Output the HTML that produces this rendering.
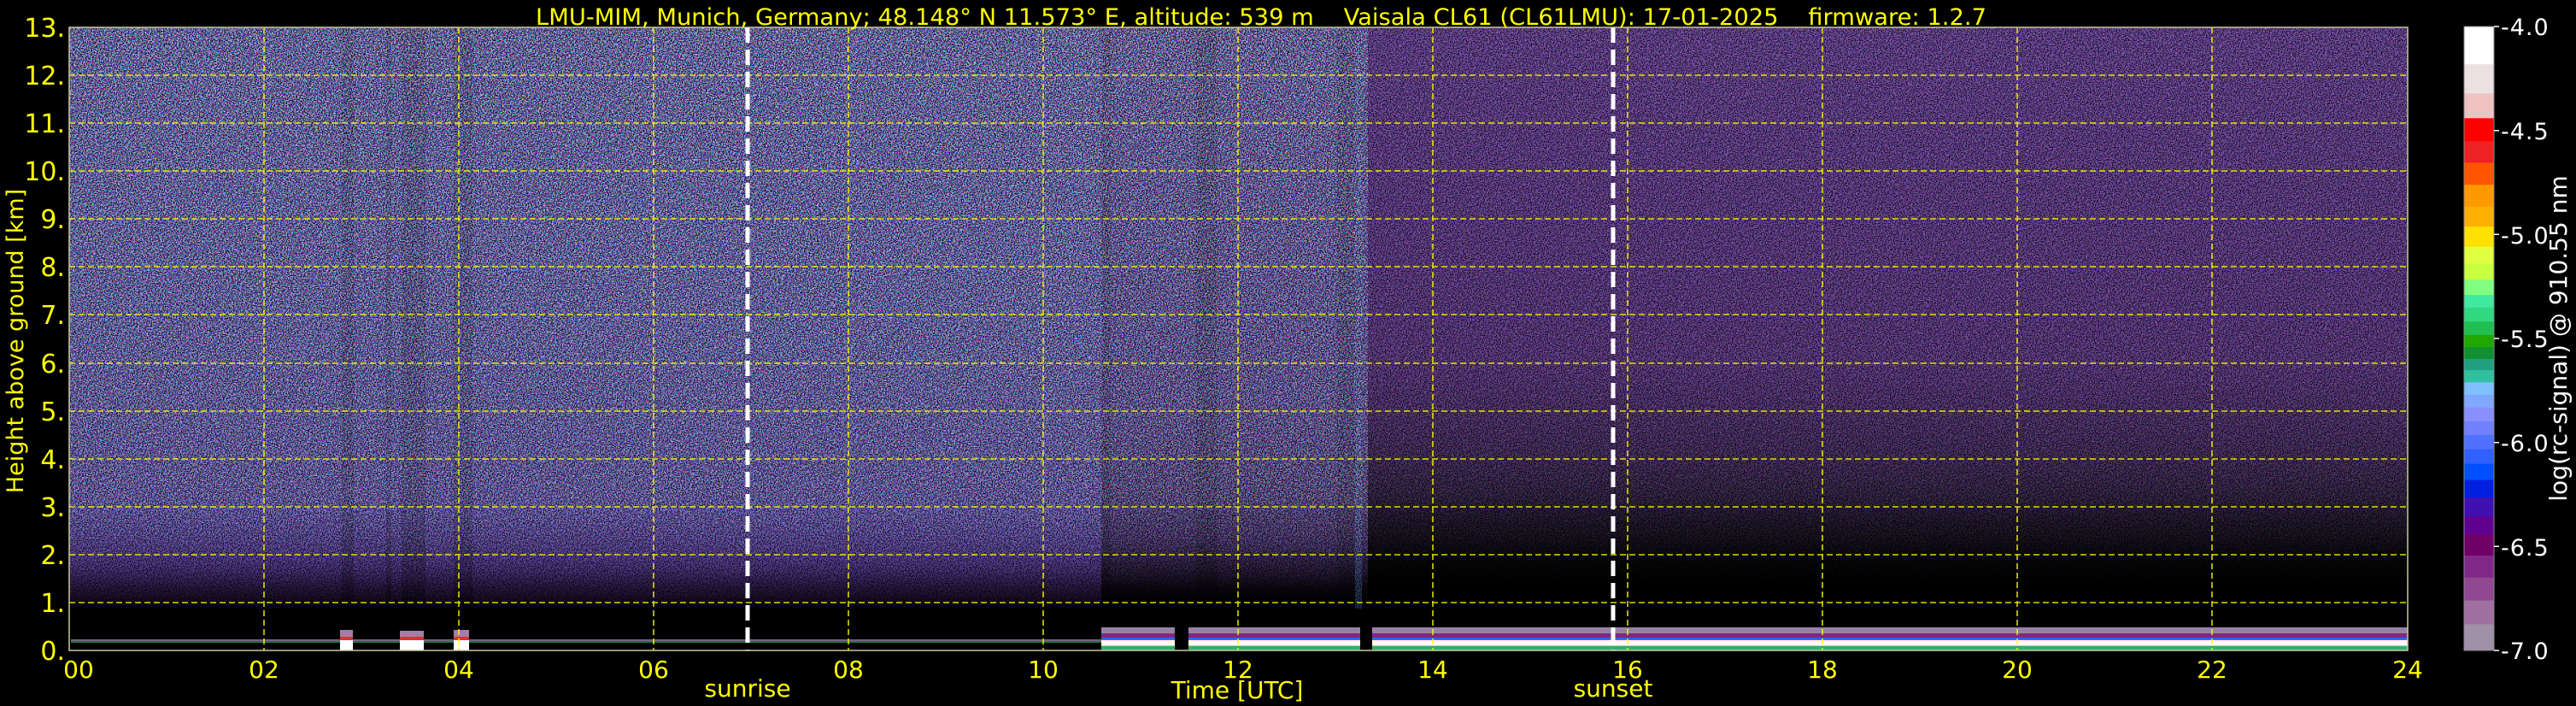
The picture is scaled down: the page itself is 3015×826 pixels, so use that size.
<!DOCTYPE html>
<html><head><meta charset="utf-8"><style>
html,body{margin:0;padding:0;background:#000;width:3015px;height:826px;overflow:hidden}
svg{display:block}
text{font-family:"DejaVu Sans","Liberation Sans",sans-serif}
</style></head><body>
<svg width="3015" height="826" viewBox="0 0 3015 826" xmlns="http://www.w3.org/2000/svg">
<defs>
<linearGradient id="gA" x1="0" y1="32" x2="0" y2="761" gradientUnits="userSpaceOnUse">
<stop offset="0" stop-color="rgb(110,110,215)"/>
<stop offset="0.5" stop-color="rgb(105,100,205)"/>
<stop offset="0.78" stop-color="rgb(100,80,190)"/>
<stop offset="0.86" stop-color="rgb(80,50,140)"/>
<stop offset="0.91" stop-color="rgb(35,20,55)"/>
<stop offset="0.935" stop-color="#000"/>
<stop offset="1" stop-color="#000"/>
</linearGradient>
<linearGradient id="gB" x1="0" y1="32" x2="0" y2="761" gradientUnits="userSpaceOnUse">
<stop offset="0" stop-color="rgb(110,95,200)"/>
<stop offset="0.6" stop-color="rgb(95,70,170)"/>
<stop offset="0.82" stop-color="rgb(65,38,105)"/>
<stop offset="0.9" stop-color="rgb(15,8,20)"/>
<stop offset="0.92" stop-color="#000"/>
<stop offset="1" stop-color="#000"/>
</linearGradient>
<linearGradient id="gC" x1="0" y1="32" x2="0" y2="761" gradientUnits="userSpaceOnUse">
<stop offset="0" stop-color="rgb(110,60,160)"/>
<stop offset="0.54" stop-color="rgb(95,48,135)"/>
<stop offset="0.7" stop-color="rgb(60,30,82)"/>
<stop offset="0.8" stop-color="rgb(20,10,28)"/>
<stop offset="0.86" stop-color="#000"/>
<stop offset="1" stop-color="#000"/>
</linearGradient>
<linearGradient id="gM" x1="0" y1="32" x2="0" y2="761" gradientUnits="userSpaceOnUse">
<stop offset="0" stop-color="#fff"/>
<stop offset="0.75" stop-color="#ccc"/>
<stop offset="0.9" stop-color="#000"/>
<stop offset="1" stop-color="#000"/>
</linearGradient>
<mask id="mk"><rect x="81" y="32" width="1520" height="729" fill="url(#gM)"/><rect x="1601" y="32" width="1217" height="729" fill="url(#gM)" opacity="0.35"/></mask>
<filter id="cn" x="0" y="0" width="100%" height="100%" filterUnits="objectBoundingBox">
<feTurbulence type="fractalNoise" baseFrequency="0.6" numOctaves="1" seed="7"/>
<feColorMatrix type="matrix" values="6 0 0 0 -2.5  0 6 0 0 -2.5  0 0 6 0 -2.1  0 0 0 0 1"/>
</filter>
<filter id="bn" x="0" y="0" width="100%" height="100%" filterUnits="objectBoundingBox">
<feTurbulence type="fractalNoise" baseFrequency="0.8" numOctaves="1" seed="3"/>
<feColorMatrix type="matrix" values="0 0 0 0 0  0 0 0 0 0  0 0 0 0 0  8 0 0 0 -3.8"/>
</filter>
</defs>

<rect x="81" y="32" width="1208" height="729" fill="url(#gA)"/>
<rect x="1289" y="32" width="312" height="729" fill="url(#gB)"/>
<rect x="1601" y="32" width="1217" height="729" fill="url(#gC)"/>
<g fill="#000" opacity="0.25">
<rect x="400" y="32" width="14" height="680"/>
<rect x="452" y="32" width="6" height="680"/>
<rect x="470" y="32" width="28" height="680"/>
<rect x="531" y="32" width="22" height="680"/>
<rect x="1290" y="32" width="10" height="660"/>
<rect x="1400" y="32" width="25" height="660"/>
<rect x="1565" y="32" width="20" height="660"/>
</g>
<rect x="1586" y="32" width="8" height="680" fill="rgb(90,140,210)" opacity="0.35"/>
<rect x="81" y="32" width="2737" height="729" filter="url(#cn)" mask="url(#mk)" opacity="0.6"/>
<rect x="81" y="32" width="2737" height="729" filter="url(#bn)" opacity="0.8"/>

<rect x="83" y="748" width="1206" height="2" fill="#c0a0e0" opacity="0.6"/>
<rect x="83" y="750" width="1206" height="2" fill="#40c080" opacity="0.6"/>
<g>
<rect x="398" y="737" width="15" height="8" fill="#a080a8"/><rect x="398" y="745" width="15" height="4" fill="#e03030"/><rect x="398" y="749" width="15" height="12" fill="#fff"/>
<rect x="468" y="738" width="28" height="7" fill="#a080a8"/><rect x="468" y="745" width="28" height="4" fill="#e03030"/><rect x="468" y="749" width="28" height="12" fill="#fff"/>
<rect x="531" y="737" width="18" height="8" fill="#a080a8"/><rect x="531" y="745" width="18" height="4" fill="#e03030"/><rect x="531" y="749" width="18" height="12" fill="#fff"/>
</g>
<g>
<rect x="1289" y="734" width="1529" height="7" fill="#9a80a8"/>
<rect x="1289" y="741" width="1529" height="5" fill="#7a2a88"/>
<rect x="1289" y="746" width="1529" height="2" fill="#3060ff"/>
<rect x="1289" y="748" width="1529" height="1" fill="#ff3030"/>
<rect x="1289" y="749" width="1529" height="6" fill="#ffffff"/>
<rect x="1289" y="755" width="1529" height="1" fill="#e0d040"/>
<rect x="1289" y="756" width="1529" height="5" fill="#30b070"/>
<rect x="1375" y="733" width="16" height="28" fill="#000"/>
<rect x="1592" y="733" width="14" height="28" fill="#000"/>
</g>

<g stroke="#ffff00" stroke-width="1.6" stroke-dasharray="7,4" opacity="0.85" fill="none">
<path d="M81 705H2818M81 649H2818M81 593H2818M81 537H2818M81 481H2818M81 425H2818M81 368H2818M81 312H2818M81 256H2818M81 200H2818M81 144H2818M81 88H2818"/>
<path d="M309 32V761M537 32V761M765 32V761M993 32V761M1221 32V761M1449 32V761M1677 32V761M1905 32V761M2133 32V761M2361 32V761M2589 32V761"/>
</g>
<g stroke="#fff" stroke-width="5" stroke-dasharray="18,8" fill="none">
<path d="M875 32V761"/><path d="M1888 32V761"/>
</g>
<rect x="81" y="32" width="2737" height="729" fill="none" stroke="#c8c8a0" stroke-width="1.5"/>

<text x="1476" y="29" fill="#ffff00" font-size="27" text-anchor="middle" textLength="1698" lengthAdjust="spacingAndGlyphs" xml:space="preserve">LMU-MIM, Munich, Germany; 48.148° N 11.573° E, altitude: 539 m    Vaisala CL61 (CL61LMU): 17-01-2025    firmware: 1.2.7</text>

<g fill="#ffff00" font-size="30" text-anchor="end">
<text x="76" y="43">13.</text><text x="76" y="99">12.</text><text x="76" y="155">11.</text><text x="76" y="211">10.</text>
<text x="76" y="267">9.</text><text x="76" y="323">8.</text><text x="76" y="379">7.</text><text x="76" y="436">6.</text>
<text x="76" y="492">5.</text><text x="76" y="548">4.</text><text x="76" y="604">3.</text><text x="76" y="660">2.</text>
<text x="76" y="716">1.</text><text x="76" y="772">0.</text>
</g>
<text transform="translate(27,399) rotate(-90)" fill="#ffff00" font-size="27" text-anchor="middle">Height above ground [km]</text>

<g fill="#ffff00" font-size="28" text-anchor="middle">
<text x="92" y="793">00</text><text x="309" y="793">02</text><text x="537" y="793">04</text><text x="765" y="793">06</text>
<text x="993" y="793">08</text><text x="1221" y="793">10</text><text x="1449" y="793">12</text><text x="1677" y="793">14</text>
<text x="1905" y="793">16</text><text x="2133" y="793">18</text><text x="2361" y="793">20</text><text x="2589" y="793">22</text>
<text x="2818" y="793">24</text>
<text x="875" y="815">sunrise</text>
<text x="1448" y="817">Time [UTC]</text>
<text x="1888" y="815">sunset</text>
</g>

<g>
<rect x="2884" y="31.0" width="35" height="44.7" fill="#ffffff"/>
<rect x="2884" y="75.2" width="35" height="34.7" fill="#ebe1e3"/>
<rect x="2884" y="109.4" width="35" height="29.4" fill="#f0c3c3"/>
<rect x="2884" y="138.3" width="35" height="27.3" fill="#ff0000"/>
<rect x="2884" y="165.2" width="35" height="25.7" fill="#ee2222"/>
<rect x="2884" y="190.4" width="35" height="26.3" fill="#ff5500"/>
<rect x="2884" y="216.2" width="35" height="26.3" fill="#ff9900"/>
<rect x="2884" y="242.0" width="35" height="23.7" fill="#ffb000"/>
<rect x="2884" y="265.1" width="35" height="24.2" fill="#ffe000"/>
<rect x="2884" y="288.8" width="35" height="20.0" fill="#e0ff40"/>
<rect x="2884" y="308.3" width="35" height="19.4" fill="#c8ff40"/>
<rect x="2884" y="327.2" width="35" height="18.4" fill="#80ff80"/>
<rect x="2884" y="345.1" width="35" height="15.2" fill="#40e8a0"/>
<rect x="2884" y="359.9" width="35" height="16.8" fill="#30d880"/>
<rect x="2884" y="376.2" width="35" height="16.3" fill="#20c050"/>
<rect x="2884" y="392.0" width="35" height="14.7" fill="#20a800"/>
<rect x="2884" y="406.2" width="35" height="14.2" fill="#109030"/>
<rect x="2884" y="419.9" width="35" height="13.7" fill="#20a080"/>
<rect x="2884" y="433.1" width="35" height="14.7" fill="#30c0a0"/>
<rect x="2884" y="447.3" width="35" height="15.2" fill="#80c0ff"/>
<rect x="2884" y="462.0" width="35" height="15.2" fill="#80a8ff"/>
<rect x="2884" y="476.8" width="35" height="16.8" fill="#8890ff"/>
<rect x="2884" y="493.1" width="35" height="16.3" fill="#7080ff"/>
<rect x="2884" y="508.9" width="35" height="17.3" fill="#5070ff"/>
<rect x="2884" y="525.7" width="35" height="17.3" fill="#3060ff"/>
<rect x="2884" y="542.6" width="35" height="19.4" fill="#0050ff"/>
<rect x="2884" y="561.5" width="35" height="21.0" fill="#0020e0"/>
<rect x="2884" y="582.0" width="35" height="22.6" fill="#4010b0"/>
<rect x="2884" y="604.1" width="35" height="21.5" fill="#600090"/>
<rect x="2884" y="625.2" width="35" height="25.2" fill="#700068"/>
<rect x="2884" y="649.9" width="35" height="26.3" fill="#802888"/>
<rect x="2884" y="675.7" width="35" height="27.3" fill="#904890"/>
<rect x="2884" y="702.5" width="35" height="28.4" fill="#a070a0"/>
<rect x="2884" y="730.4" width="35" height="30.6" fill="#a090a8"/>
<rect x="2884" y="31" width="35" height="730" fill="none" stroke="#888" stroke-width="1"/>
</g>
<g stroke="#fff" stroke-width="1.5">
<path d="M2919 31h6M2919 152.7h6M2919 274.3h6M2919 396h6M2919 517.7h6M2919 639.3h6M2919 761h6"/>
</g>
<g fill="#fff" font-size="27" letter-spacing="1">
<text x="2927" y="41">-4.0</text>
<text x="2927" y="163">-4.5</text>
<text x="2927" y="285">-5.0</text>
<text x="2927" y="406">-5.5</text>
<text x="2927" y="528">-6.0</text>
<text x="2927" y="650">-6.5</text>
<text x="2927" y="771">-7.0</text>
</g>
<text transform="translate(3004,396) rotate(-90)" fill="#fff" font-size="28" text-anchor="middle">log(rc-signal) @ 910.55 nm</text>
</svg>
</body></html>
